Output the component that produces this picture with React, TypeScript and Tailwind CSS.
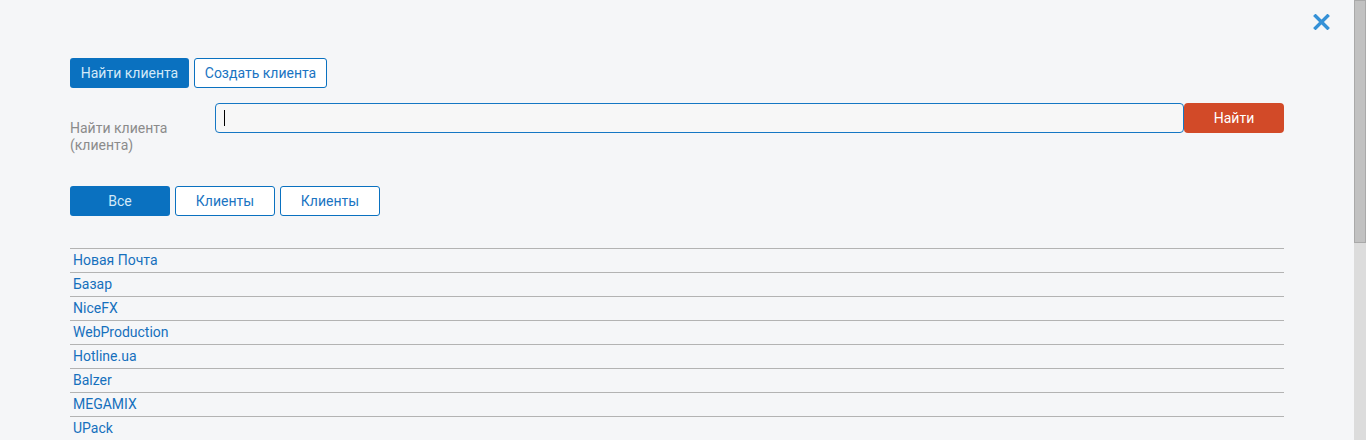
import React from 'react';

const clients = ['Новая Почта', 'Базар', 'NiceFX', 'WebProduction', 'Hotline.ua', 'Balzer', 'MEGAMIX', 'UPack'];

const App: React.FC = () => {
  return (
    <div className="flex h-[440px] overflow-hidden bg-[#f5f6f8] font-['Roboto',sans-serif] text-[14px]">
      <div className="flex-1 min-w-0">
        {/* Close */}
        <div className="flex justify-end pt-[14px] pr-[24px] h-[58px]">
          <button className="w-[17px] h-[16px] text-[#3591d7]">
            <svg viewBox="0 0 17 16" width="17" height="16">
              <path d="M2.5 2 L14.5 14 M14.5 2 L2.5 14" stroke="currentColor" strokeWidth="3.4" strokeLinecap="square" />
            </svg>
          </button>
        </div>

        <div className="px-[70px]">
          {/* Tabs */}
          <div className="flex gap-[5px]">
            <button className="h-[30px] w-[119px] rounded-[3px] bg-[#0a71c0] text-[#d3e9f8]">Найти клиента</button>
            <button className="h-[30px] w-[133px] rounded-[3px] border border-[#0a71c0] bg-white text-[#1a74c2]">Создать клиента</button>
          </div>

          {/* Search */}
          <div className="flex mt-[15px]">
            <label className="w-[145px] pt-[17px] text-[#8b8b8b] leading-[17px]">
              Найти клиента<br />(клиента)
            </label>
            <div className="flex-1 flex">
              <div className="flex-1 h-[30px] rounded-[4px] border border-[#1577c4] bg-[#f7f7f7] flex items-center pl-[8px]">
                <span className="w-[1px] h-[16px] bg-black" />
              </div>
              <button className="w-[100px] h-[30px] rounded-[4px] bg-[#d24a28] text-white">Найти</button>
            </div>
          </div>

          {/* Filters */}
          <div className="flex gap-[5px] mt-[32px]">
            <button className="h-[30px] w-[100px] rounded-[3px] bg-[#0a71c0] text-[#d3e9f8]">Все</button>
            <button className="h-[30px] w-[100px] rounded-[3px] border border-[#0a71c0] bg-white text-[#1a74c2]">Клиенты</button>
            <button className="h-[30px] w-[100px] rounded-[3px] border border-[#0a71c0] bg-white text-[#1a74c2]">Клиенты</button>
          </div>

          {/* List */}
          <div className="mt-[32px]">
            {clients.map((c) => (
              <div key={c} className="border-t border-[#b3b3b3] h-[24px] pl-[3px] flex items-center text-[#1670bd]">
                {c}
              </div>
            ))}
          </div>
        </div>
      </div>

      {/* Scrollbar */}
      <div className="w-[12px] flex flex-col bg-[#dcdcdc]">
        <div className="h-[243px] bg-[#c1c1c1] border border-[#a9a9a9]" />
      </div>
    </div>
  );
};

export default App;
